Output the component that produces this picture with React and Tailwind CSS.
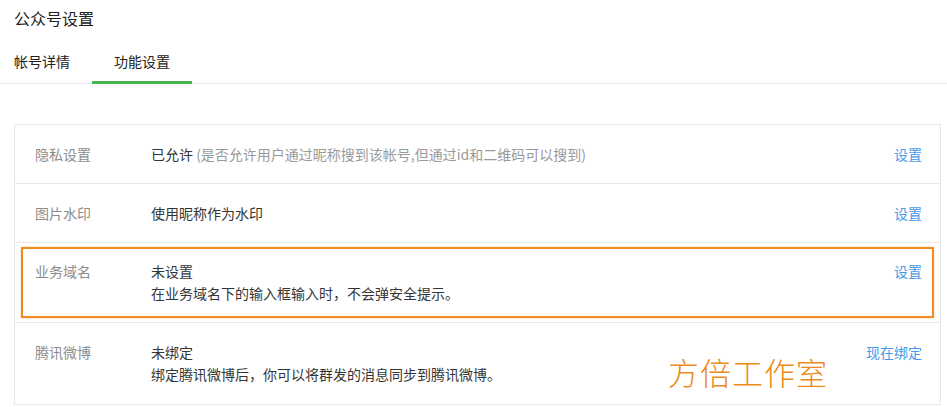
import React from "react";

const font = { fontFamily: '"Noto Sans CJK SC", "Noto Sans", sans-serif' };

const Row = ({ label, children, action, className = "" }) => (
  <div className={`flex text-[14px] leading-[22px] ${className}`}>
    <div className="w-[116px] shrink-0 text-[#8d8d8d]">{label}</div>
    <div className="flex-1 text-[#353535]">{children}</div>
    <a className="shrink-0 text-[#459ae9] cursor-pointer">{action}</a>
  </div>
);

const App = () => {
  return (
    <div className="w-[947px] h-[407px] bg-white overflow-hidden relative" style={font}>
      <div className="px-[14px] pt-[7px] h-[38px] text-[16px] leading-[22px] text-[#222]">
        公众号设置
      </div>

      <div className="flex border-b border-[#e7e7eb] h-[46px] text-[14px] text-[#222]">
        <div className="w-[92px] pl-[14px] pt-[12px] leading-[22px]">帐号详情</div>
        <div className="w-[100px] pt-[12px] leading-[22px] text-center border-b-[3px] border-[#44b549] -mb-px">
          功能设置
        </div>
      </div>

      <div className="ml-[14px] w-[927px] mt-[40px] border border-[#e7e7eb]">
        <Row label="隐私设置" action="设置" className="pl-[20px] pr-[18px] py-[18px] border-b border-[#e7e7eb]">
          已允许 <span className="text-[#9a9a9a]">(是否允许用户通过昵称搜到该帐号,但通过id和二维码可以搜到)</span>
        </Row>
        <Row label="图片水印" action="设置" className="pl-[20px] pr-[18px] py-[18px] border-b border-[#e7e7eb]">
          使用昵称作为水印
        </Row>
        <div className="px-[6px] pt-[4px] pb-[4px] border-b border-[#e7e7eb]">
          <Row
            label="业务域名"
            action="设置"
            className="border-2 border-[#f0891e] pl-[12px] pr-[10px] pt-[11px] pb-[12px] shadow-[0_0_2px_rgba(240,137,30,0.4)]"
          >
            <div>未设置</div>
            <div>在业务域名下的输入框输入时，不会弹安全提示。</div>
          </Row>
        </div>
        <Row label="腾讯微博" action="现在绑定" className="pl-[20px] pr-[18px] pt-[18px] pb-[19px]">
          <div>未绑定</div>
          <div>绑定腾讯微博后，你可以将群发的消息同步到腾讯微博。</div>
        </Row>
      </div>

      <div className="absolute left-[668px] top-[352px] text-[31px] leading-[40px] font-light tracking-[1px] text-[#ec8a1c]">
        方倍工作室
      </div>
    </div>
  );
};

export default App;
